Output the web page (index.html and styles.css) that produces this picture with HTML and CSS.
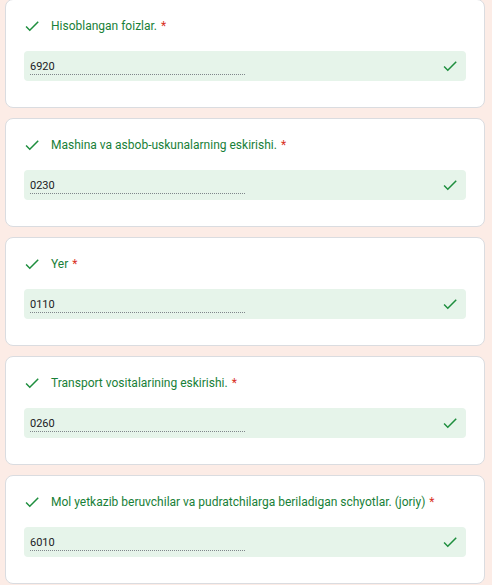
FILE: index.html
```html
<!DOCTYPE html>
<html lang="uz">
<head>
    <meta charset="UTF-8">
    <meta name="viewport" content="width=device-width, initial-scale=1.0">
    <link rel="stylesheet" href="styles.css">
    <title>Javoblar</title>
</head>
<body>

<div class="list">
    <div class="card">
        <div class="question">
            <svg class="check" viewBox="0 0 24 24"><path d="M9 16.17L4.83 12l-1.42 1.41L9 19 21 7l-1.41-1.41z"/></svg>
            <span class="title">Hisoblangan foizlar.</span>
            <span class="required">*</span>
        </div>
        <div class="answer">
            <span class="value">6920</span>
            <svg class="check" viewBox="0 0 24 24"><path d="M9 16.17L4.83 12l-1.42 1.41L9 19 21 7l-1.41-1.41z"/></svg>
        </div>
    </div>

    <div class="card">
        <div class="question">
            <svg class="check" viewBox="0 0 24 24"><path d="M9 16.17L4.83 12l-1.42 1.41L9 19 21 7l-1.41-1.41z"/></svg>
            <span class="title">Mashina va asbob-uskunalarning eskirishi.</span>
            <span class="required">*</span>
        </div>
        <div class="answer">
            <span class="value">0230</span>
            <svg class="check" viewBox="0 0 24 24"><path d="M9 16.17L4.83 12l-1.42 1.41L9 19 21 7l-1.41-1.41z"/></svg>
        </div>
    </div>

    <div class="card">
        <div class="question">
            <svg class="check" viewBox="0 0 24 24"><path d="M9 16.17L4.83 12l-1.42 1.41L9 19 21 7l-1.41-1.41z"/></svg>
            <span class="title">Yer</span>
            <span class="required">*</span>
        </div>
        <div class="answer">
            <span class="value">0110</span>
            <svg class="check" viewBox="0 0 24 24"><path d="M9 16.17L4.83 12l-1.42 1.41L9 19 21 7l-1.41-1.41z"/></svg>
        </div>
    </div>

    <div class="card">
        <div class="question">
            <svg class="check" viewBox="0 0 24 24"><path d="M9 16.17L4.83 12l-1.42 1.41L9 19 21 7l-1.41-1.41z"/></svg>
            <span class="title">Transport vositalarining eskirishi.</span>
            <span class="required">*</span>
        </div>
        <div class="answer">
            <span class="value">0260</span>
            <svg class="check" viewBox="0 0 24 24"><path d="M9 16.17L4.83 12l-1.42 1.41L9 19 21 7l-1.41-1.41z"/></svg>
        </div>
    </div>

    <div class="card">
        <div class="question">
            <svg class="check" viewBox="0 0 24 24"><path d="M9 16.17L4.83 12l-1.42 1.41L9 19 21 7l-1.41-1.41z"/></svg>
            <span class="title">Mol yetkazib beruvchilar va pudratchilarga beriladigan schyotlar. (joriy)</span>
            <span class="required">*</span>
        </div>
        <div class="answer">
            <span class="value">6010</span>
            <svg class="check" viewBox="0 0 24 24"><path d="M9 16.17L4.83 12l-1.42 1.41L9 19 21 7l-1.41-1.41z"/></svg>
        </div>
    </div>
</div>

</body>
</html>
```

FILE: styles.css
```css
body {
    margin: 0;
    background-color: #fcece6;
    font-family: Roboto, "Liberation Sans", Arial, sans-serif;
    overflow: hidden;
}

.list {
    display: flex;
    flex-direction: column;
    gap: 10px;
    margin: -1px 7px 0 5px;
}

.card {
    height: 109px;
    box-sizing: border-box;
    padding: 17px 18px 0 18px;
    background-color: #fff;
    border: 1px solid #dadce0;
    border-radius: 8px;
}

.question {
    display: flex;
    align-items: center;
    height: 18px;
    font-size: 12px;
}

.question .check {
    margin-left: -1px;
    margin-right: 10px;
}

.check {
    width: 18px;
    height: 18px;
    flex: none;
    fill: #1e8e3e;
}

.title {
    color: #188038;
}

.required {
    color: #d93025;
    margin-left: 4px;
}

.answer {
    display: flex;
    align-items: center;
    justify-content: space-between;
    height: 30px;
    margin-top: 16px;
    padding: 0 7px 0 6px;
    background-color: #e6f4ea;
    border-radius: 4px;
}

.value {
    width: 215px;
    margin-top: 2px;
    padding-bottom: 1px;
    font-size: 11px;
    color: #202124;
    border-bottom: 1px dotted #80868b;
}
```
